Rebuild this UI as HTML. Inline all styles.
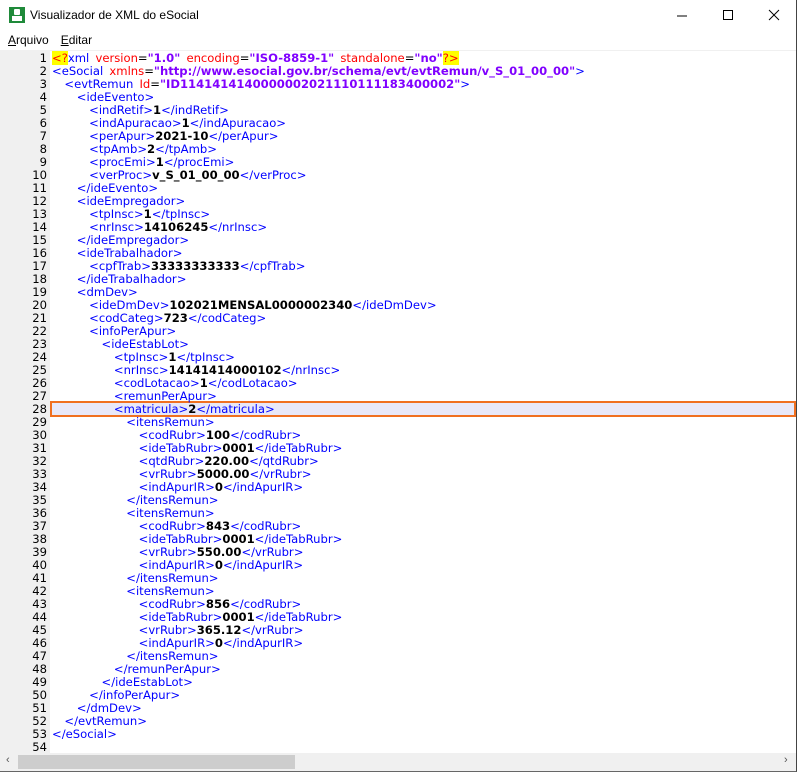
<!DOCTYPE html>
<html><head><meta charset="utf-8"><style>
body{margin:0;width:800px;height:773px;overflow:hidden;background:#fff;font-family:"Liberation Sans",sans-serif;position:relative}
.win{position:absolute;left:0;top:0;width:797px;height:772px;border-right:1px solid #444;border-bottom:1px solid #666;box-sizing:border-box;overflow:hidden}
.title{position:absolute;left:0;top:0;height:31px;width:796px;font-size:12px}
.title .t{position:absolute;left:30px;top:8px;color:#000}
.icon{position:absolute;left:9px;top:7px;width:16px;height:16px;background:#1f8a3a}
.icon:before{content:"";position:absolute;left:5px;top:2px;width:6px;height:6px;background:#fff;border-radius:1px}
.icon:after{content:"";position:absolute;left:3px;top:9px;width:10px;height:5px;background:#fff}
.menu{position:absolute;top:33px;left:8px;font-size:12px}
.menu span{margin-right:12px}
.ed{position:absolute;left:0;top:50px;width:796px;height:703px;border-top:1px solid #f0f0f0;overflow:hidden}
.gut{position:absolute;left:0;top:0;width:50px;height:703px;background:#f0f0f0}
.lines{position:absolute;left:0;top:1px;font-family:"DejaVu Sans",sans-serif;font-size:11.6px;line-height:13px;white-space:normal}
.ln{display:block;height:13px;white-space:pre;word-spacing:2.5px}
.ln span{word-spacing:0}
.n{display:inline-block;width:47px;text-align:right;color:#000;margin-right:5px}
.b{color:#0000ff}.r{color:#ff0000}.p{color:#8000ff;font-weight:bold}.k{font-weight:bold;color:#000}.y{background:#ffff00;color:#ff0000}
.hl{position:absolute;left:50px;top:350px;width:746px;height:16px;border:2px solid #f07020;box-sizing:border-box;background:#e8e8f8}
.sb{position:absolute;left:0;top:753px;width:796px;height:18px;background:#f0f0f0}
.th{position:absolute;left:18px;top:2px;width:277px;height:14px;background:#cdcdcd}
</style></head><body>
<div class="win">
<div class="title"><div class="icon"></div><span class="t">Visualizador de XML do eSocial</span>
<svg style="position:absolute;left:672px;top:8px" width="120" height="16"><line x1="5" y1="8" x2="15" y2="8" stroke="#000"/><rect x="51.5" y="2.5" width="9" height="9" fill="none" stroke="#000"/><line x1="97" y1="2" x2="107" y2="12" stroke="#000"/><line x1="107" y1="2" x2="97" y2="12" stroke="#000"/></svg></div>
<div class="menu"><span><u>A</u>rquivo</span><span><u>E</u>ditar</span></div>
<div class="ed"><div class="gut"></div><div class="hl"></div>
<div class="lines">
<span class="ln"><span class="n">1</span><span class="y">&lt;?</span><span class="b">xml</span> <span class="r">version</span>=<span class="p">"1.0"</span> <span class="r">encoding</span>=<span class="p">"ISO-8859-1"</span> <span class="r">standalone</span>=<span class="p">"no"</span><span class="y">?&gt;</span></span>
<span class="ln"><span class="n">2</span><span class="b">&lt;eSocial</span> <span class="r">xmlns</span>=<span class="p">"http://www.esocial.gov.br/schema/evt/evtRemun/v_S_01_00_00"</span><span class="b">&gt;</span></span>
<span class="ln"><span class="n">3</span>  <span class="b">&lt;evtRemun</span> <span class="r">Id</span>=<span class="p">"ID1141414140000002021110111183400002"</span><span class="b">&gt;</span></span>
<span class="ln"><span class="n">4</span>    <span class="b">&lt;ideEvento&gt;</span></span>
<span class="ln"><span class="n">5</span>      <span class="b">&lt;indRetif&gt;</span><span class="k">1</span><span class="b">&lt;/indRetif&gt;</span></span>
<span class="ln"><span class="n">6</span>      <span class="b">&lt;indApuracao&gt;</span><span class="k">1</span><span class="b">&lt;/indApuracao&gt;</span></span>
<span class="ln"><span class="n">7</span>      <span class="b">&lt;perApur&gt;</span><span class="k">2021-10</span><span class="b">&lt;/perApur&gt;</span></span>
<span class="ln"><span class="n">8</span>      <span class="b">&lt;tpAmb&gt;</span><span class="k">2</span><span class="b">&lt;/tpAmb&gt;</span></span>
<span class="ln"><span class="n">9</span>      <span class="b">&lt;procEmi&gt;</span><span class="k">1</span><span class="b">&lt;/procEmi&gt;</span></span>
<span class="ln"><span class="n">10</span>      <span class="b">&lt;verProc&gt;</span><span class="k">v_S_01_00_00</span><span class="b">&lt;/verProc&gt;</span></span>
<span class="ln"><span class="n">11</span>    <span class="b">&lt;/ideEvento&gt;</span></span>
<span class="ln"><span class="n">12</span>    <span class="b">&lt;ideEmpregador&gt;</span></span>
<span class="ln"><span class="n">13</span>      <span class="b">&lt;tpInsc&gt;</span><span class="k">1</span><span class="b">&lt;/tpInsc&gt;</span></span>
<span class="ln"><span class="n">14</span>      <span class="b">&lt;nrInsc&gt;</span><span class="k">14106245</span><span class="b">&lt;/nrInsc&gt;</span></span>
<span class="ln"><span class="n">15</span>    <span class="b">&lt;/ideEmpregador&gt;</span></span>
<span class="ln"><span class="n">16</span>    <span class="b">&lt;ideTrabalhador&gt;</span></span>
<span class="ln"><span class="n">17</span>      <span class="b">&lt;cpfTrab&gt;</span><span class="k">33333333333</span><span class="b">&lt;/cpfTrab&gt;</span></span>
<span class="ln"><span class="n">18</span>    <span class="b">&lt;/ideTrabalhador&gt;</span></span>
<span class="ln"><span class="n">19</span>    <span class="b">&lt;dmDev&gt;</span></span>
<span class="ln"><span class="n">20</span>      <span class="b">&lt;ideDmDev&gt;</span><span class="k">102021MENSAL0000002340</span><span class="b">&lt;/ideDmDev&gt;</span></span>
<span class="ln"><span class="n">21</span>      <span class="b">&lt;codCateg&gt;</span><span class="k">723</span><span class="b">&lt;/codCateg&gt;</span></span>
<span class="ln"><span class="n">22</span>      <span class="b">&lt;infoPerApur&gt;</span></span>
<span class="ln"><span class="n">23</span>        <span class="b">&lt;ideEstabLot&gt;</span></span>
<span class="ln"><span class="n">24</span>          <span class="b">&lt;tpInsc&gt;</span><span class="k">1</span><span class="b">&lt;/tpInsc&gt;</span></span>
<span class="ln"><span class="n">25</span>          <span class="b">&lt;nrInsc&gt;</span><span class="k">14141414000102</span><span class="b">&lt;/nrInsc&gt;</span></span>
<span class="ln"><span class="n">26</span>          <span class="b">&lt;codLotacao&gt;</span><span class="k">1</span><span class="b">&lt;/codLotacao&gt;</span></span>
<span class="ln"><span class="n">27</span>          <span class="b">&lt;remunPerApur&gt;</span></span>
<span class="ln"><span class="n">28</span>          <span class="b">&lt;matricula&gt;</span><span class="k">2</span><span class="b">&lt;/matricula&gt;</span></span>
<span class="ln"><span class="n">29</span>            <span class="b">&lt;itensRemun&gt;</span></span>
<span class="ln"><span class="n">30</span>              <span class="b">&lt;codRubr&gt;</span><span class="k">100</span><span class="b">&lt;/codRubr&gt;</span></span>
<span class="ln"><span class="n">31</span>              <span class="b">&lt;ideTabRubr&gt;</span><span class="k">0001</span><span class="b">&lt;/ideTabRubr&gt;</span></span>
<span class="ln"><span class="n">32</span>              <span class="b">&lt;qtdRubr&gt;</span><span class="k">220.00</span><span class="b">&lt;/qtdRubr&gt;</span></span>
<span class="ln"><span class="n">33</span>              <span class="b">&lt;vrRubr&gt;</span><span class="k">5000.00</span><span class="b">&lt;/vrRubr&gt;</span></span>
<span class="ln"><span class="n">34</span>              <span class="b">&lt;indApurIR&gt;</span><span class="k">0</span><span class="b">&lt;/indApurIR&gt;</span></span>
<span class="ln"><span class="n">35</span>            <span class="b">&lt;/itensRemun&gt;</span></span>
<span class="ln"><span class="n">36</span>            <span class="b">&lt;itensRemun&gt;</span></span>
<span class="ln"><span class="n">37</span>              <span class="b">&lt;codRubr&gt;</span><span class="k">843</span><span class="b">&lt;/codRubr&gt;</span></span>
<span class="ln"><span class="n">38</span>              <span class="b">&lt;ideTabRubr&gt;</span><span class="k">0001</span><span class="b">&lt;/ideTabRubr&gt;</span></span>
<span class="ln"><span class="n">39</span>              <span class="b">&lt;vrRubr&gt;</span><span class="k">550.00</span><span class="b">&lt;/vrRubr&gt;</span></span>
<span class="ln"><span class="n">40</span>              <span class="b">&lt;indApurIR&gt;</span><span class="k">0</span><span class="b">&lt;/indApurIR&gt;</span></span>
<span class="ln"><span class="n">41</span>            <span class="b">&lt;/itensRemun&gt;</span></span>
<span class="ln"><span class="n">42</span>            <span class="b">&lt;itensRemun&gt;</span></span>
<span class="ln"><span class="n">43</span>              <span class="b">&lt;codRubr&gt;</span><span class="k">856</span><span class="b">&lt;/codRubr&gt;</span></span>
<span class="ln"><span class="n">44</span>              <span class="b">&lt;ideTabRubr&gt;</span><span class="k">0001</span><span class="b">&lt;/ideTabRubr&gt;</span></span>
<span class="ln"><span class="n">45</span>              <span class="b">&lt;vrRubr&gt;</span><span class="k">365.12</span><span class="b">&lt;/vrRubr&gt;</span></span>
<span class="ln"><span class="n">46</span>              <span class="b">&lt;indApurIR&gt;</span><span class="k">0</span><span class="b">&lt;/indApurIR&gt;</span></span>
<span class="ln"><span class="n">47</span>            <span class="b">&lt;/itensRemun&gt;</span></span>
<span class="ln"><span class="n">48</span>          <span class="b">&lt;/remunPerApur&gt;</span></span>
<span class="ln"><span class="n">49</span>        <span class="b">&lt;/ideEstabLot&gt;</span></span>
<span class="ln"><span class="n">50</span>      <span class="b">&lt;/infoPerApur&gt;</span></span>
<span class="ln"><span class="n">51</span>    <span class="b">&lt;/dmDev&gt;</span></span>
<span class="ln"><span class="n">52</span>  <span class="b">&lt;/evtRemun&gt;</span></span>
<span class="ln"><span class="n">53</span><span class="b">&lt;/eSocial&gt;</span></span>
<span class="ln"><span class="n">54</span></span>
</div></div>
<div class="sb"><span style="position:absolute;left:6px;top:1px;font-size:11px;color:#555">‹</span><div class="th"></div><span style="position:absolute;left:784px;top:1px;font-size:11px;color:#555">›</span></div>
</div>
</body></html>
